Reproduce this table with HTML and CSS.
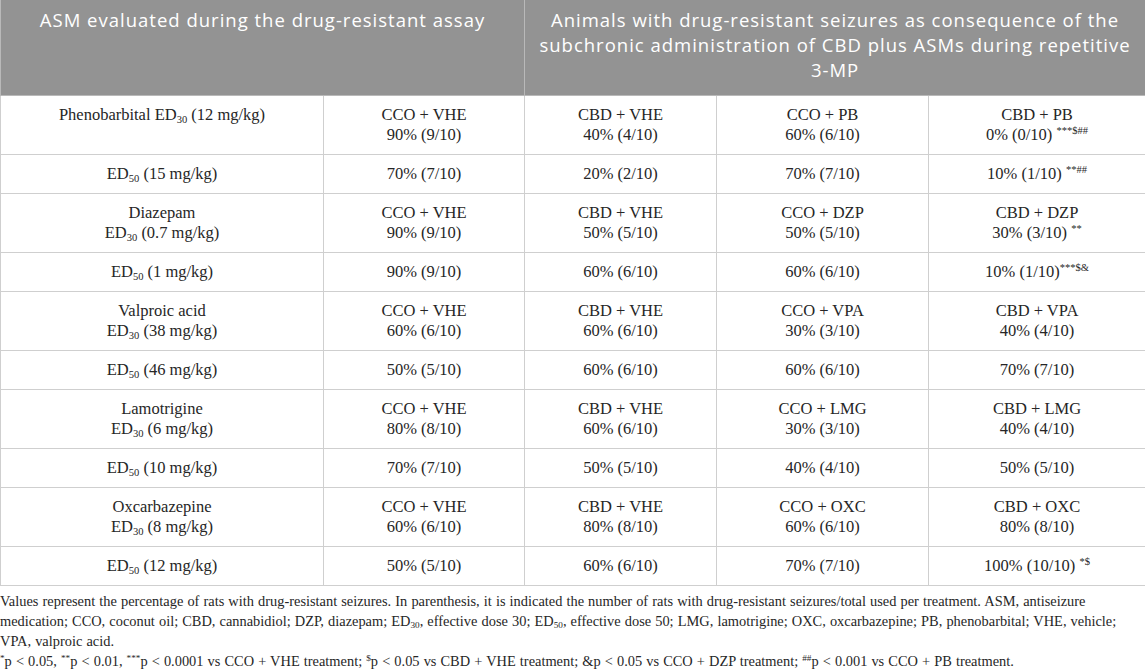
FILE: index.html
```html
<!DOCTYPE html>
<html lang="en">
<head>
<meta charset="utf-8">
<title>Drug-resistant assay table</title>
<link rel="stylesheet" href="styles.css">
</head>
<body>
<div class="wrap">
<table class="data">
  <colgroup>
    <col class="c1"><col class="c2"><col class="c3"><col class="c4"><col class="c5">
  </colgroup>
  <thead>
    <tr>
      <th colspan="2">ASM evaluated during the drug-resistant assay</th>
      <th colspan="3">Animals with drug-resistant seizures as consequence of the subchronic administration of CBD plus ASMs during repetitive <span class="nw">3-MP</span></th>
    </tr>
  </thead>
  <tbody>
    <tr class="two">
      <td>Phenobarbital ED<sub>30</sub> (12 mg/kg)</td>
      <td>CCO + VHE<br>90% (9/10)</td>
      <td>CBD + VHE<br>40% (4/10)</td>
      <td>CCO + PB<br>60% (6/10)</td>
      <td>CBD + PB<br>0% (0/10) <sup>***$##</sup></td>
    </tr>
    <tr>
      <td>ED<sub>50</sub> (15 mg/kg)</td>
      <td>70% (7/10)</td>
      <td>20% (2/10)</td>
      <td>70% (7/10)</td>
      <td>10% (1/10) <sup>**##</sup></td>
    </tr>
    <tr class="two">
      <td>Diazepam<br>ED<sub>30</sub> (0.7 mg/kg)</td>
      <td>CCO + VHE<br>90% (9/10)</td>
      <td>CBD + VHE<br>50% (5/10)</td>
      <td>CCO + DZP<br>50% (5/10)</td>
      <td>CBD + DZP<br>30% (3/10) <sup>**</sup></td>
    </tr>
    <tr>
      <td>ED<sub>50</sub> (1 mg/kg)</td>
      <td>90% (9/10)</td>
      <td>60% (6/10)</td>
      <td>60% (6/10)</td>
      <td>10% (1/10)<sup>***$&amp;</sup></td>
    </tr>
    <tr class="two">
      <td>Valproic acid<br>ED<sub>30</sub> (38 mg/kg)</td>
      <td>CCO + VHE<br>60% (6/10)</td>
      <td>CBD + VHE<br>60% (6/10)</td>
      <td>CCO + VPA<br>30% (3/10)</td>
      <td>CBD + VPA<br>40% (4/10)</td>
    </tr>
    <tr>
      <td>ED<sub>50</sub> (46 mg/kg)</td>
      <td>50% (5/10)</td>
      <td>60% (6/10)</td>
      <td>60% (6/10)</td>
      <td>70% (7/10)</td>
    </tr>
    <tr class="two">
      <td>Lamotrigine<br>ED<sub>30</sub> (6 mg/kg)</td>
      <td>CCO + VHE<br>80% (8/10)</td>
      <td>CBD + VHE<br>60% (6/10)</td>
      <td>CCO + LMG<br>30% (3/10)</td>
      <td>CBD + LMG<br>40% (4/10)</td>
    </tr>
    <tr>
      <td>ED<sub>50</sub> (10 mg/kg)</td>
      <td>70% (7/10)</td>
      <td>50% (5/10)</td>
      <td>40% (4/10)</td>
      <td>50% (5/10)</td>
    </tr>
    <tr class="two">
      <td>Oxcarbazepine<br>ED<sub>30</sub> (8 mg/kg)</td>
      <td>CCO + VHE<br>60% (6/10)</td>
      <td>CBD + VHE<br>80% (8/10)</td>
      <td>CCO + OXC<br>60% (6/10)</td>
      <td>CBD + OXC<br>80% (8/10)</td>
    </tr>
    <tr>
      <td>ED<sub>50</sub> (12 mg/kg)</td>
      <td>50% (5/10)</td>
      <td>60% (6/10)</td>
      <td>70% (7/10)</td>
      <td>100% (10/10) <sup>*$</sup></td>
    </tr>
  </tbody>
</table>
<div class="notes">
  <p>Values represent the percentage of rats with drug-resistant seizures. In parenthesis, it is indicated the number of rats with drug-resistant seizures/total used per treatment. ASM, antiseizure medication; CCO, coconut oil; CBD, cannabidiol; DZP, diazepam; ED<sub>30</sub>, effective dose 30; ED<sub>50</sub>, effective dose 50; LMG, lamotrigine; OXC, oxcarbazepine; PB, phenobarbital; VHE, vehicle; VPA, valproic acid.</p>
  <p><sup>*</sup>p &lt; 0.05, <sup>**</sup>p &lt; 0.01, <sup>***</sup>p &lt; 0.0001 vs CCO + VHE treatment; <sup>$</sup>p &lt; 0.05 vs CBD + VHE treatment; &amp;p &lt; 0.05 vs CCO + DZP treatment; <sup>##</sup>p &lt; 0.001 vs CCO + PB treatment.</p>
</div>
</div>
</body>
</html>
```

FILE: styles.css
```css
html, body {
  margin: 0;
  padding: 0;
  background: #ffffff;
}

.wrap {
  width: 1145px;
  font-family: "Liberation Serif", "Times New Roman", serif;
  color: #262626;
}

.data {
  width: 1145px;
  border-collapse: collapse;
  table-layout: fixed;
}

.c1 { width: 323px; }
.c2 { width: 201px; }
.c3 { width: 192px; }
.c4 { width: 212px; }
.c5 { width: 217px; }

.data th {
  background: #939393;
  color: #ffffff;
  font-family: "Open Sans", Lato, sans-serif;
  font-weight: 400;
  font-size: 18.5px;
  letter-spacing: 1px;
  line-height: 25px;
  height: 95px;
  box-sizing: border-box;
  padding: 7px 2px 0;
  vertical-align: top;
  text-align: center;
  border: 1px solid #b9b9b9;
  border-top: none;
}

.nw {
  white-space: nowrap;
}

.data td {
  font-size: 16.5px;
  line-height: 20px;
  text-align: center;
  vertical-align: top;
  padding: 9px 4px 9px;
  border: 1px solid #cfcfcf;
  box-sizing: border-box;
}

.data tbody tr { height: 39px; }
.data tbody tr.two { height: 59px; }

sub, sup {
  font-size: 0.64em;
  line-height: 0;
  position: relative;
  vertical-align: baseline;
}

sub { top: 0.3em; }
sup { top: -0.5em; }

.notes {
  padding-top: 5px;
  font-size: 14.4px;
  word-spacing: 0.5px;
  line-height: 20px;
}

.notes p {
  margin: 0;
}
```
